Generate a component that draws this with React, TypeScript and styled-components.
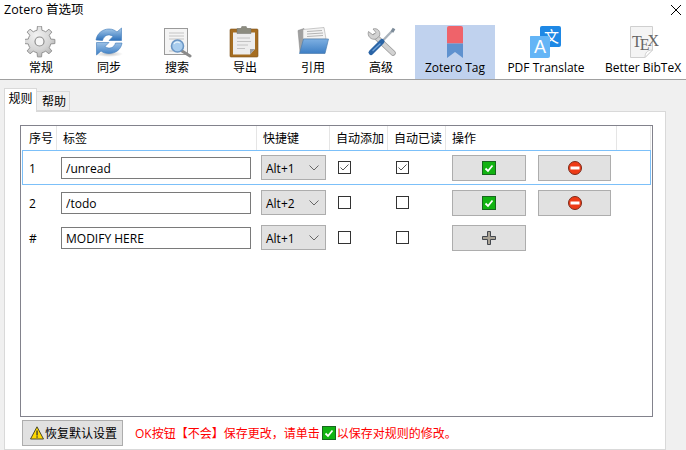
import React from 'react';
import styled, { createGlobalStyle } from 'styled-components';

const GlobalStyle = createGlobalStyle`
  html, body {
    margin: 0;
    padding: 0;
    background: #f0f0f0;
  }
  body {
    width: 686px;
    height: 450px;
    overflow: hidden;
    font-family: 'Open Sans', 'Noto Sans CJK SC', sans-serif;
    font-size: 12px;
    color: #000;
  }
  * {
    box-sizing: border-box;
  }
`;

const COLUMNS = '35px 200px 73px 58px 58px 171px 34px';

const gearPath = (() => {
  const teeth = 8;
  const points: string[] = [];
  for (let i = 0; i < teeth; i++) {
    const base = (i / teeth) * Math.PI * 2 - Math.PI / 2;
    const step = (Math.PI * 2) / teeth;
    [
      [-0.5, 11.5],
      [-0.27, 11.5],
      [-0.17, 15.5],
      [0.17, 15.5],
      [0.27, 11.5],
    ].forEach(([offset, radius]) => {
      const angle = base + offset * step;
      points.push(
        `${(14.5 + radius * Math.cos(angle)).toFixed(2)} ${(15.5 + radius * Math.sin(angle)).toFixed(2)}`,
      );
    });
  }
  return `M${points.join('L')}Z`;
})();

const GearIcon = () => (
  <svg width="32" height="32" viewBox="0 0 32 32">
    <defs>
      <radialGradient id="gearFill" cx="40%" cy="30%" r="80%">
        <stop offset="0" stopColor="#f2f2f2" />
        <stop offset="0.6" stopColor="#d4d4d4" />
        <stop offset="1" stopColor="#adadad" />
      </radialGradient>
    </defs>
    <path d={gearPath} fill="url(#gearFill)" stroke="#949494" strokeWidth="1" strokeLinejoin="round" />
    <circle cx="14.500" cy="15.500" r="4.500" fill="#f7f7f7" stroke="#8e8e8e" strokeWidth="1.200" />
  </svg>
);

const SyncIcon = () => (
  <svg width="32" height="32" viewBox="0 0 32 32">
    <defs>
      <linearGradient id="syncTop" x1="0" y1="0" x2="0" y2="1">
        <stop offset="0" stopColor="#a9cbea" />
        <stop offset="1" stopColor="#2d71bb" />
      </linearGradient>
      <linearGradient id="syncBottom" x1="0" y1="0" x2="0" y2="1">
        <stop offset="0" stopColor="#9cc1e6" />
        <stop offset="1" stopColor="#3a7dc4" />
      </linearGradient>
      <radialGradient id="syncShadow">
        <stop offset="0" stopColor="#999" stopOpacity="0.6" />
        <stop offset="1" stopColor="#999" stopOpacity="0" />
      </radialGradient>
    </defs>
    <ellipse cx="16" cy="28" rx="14" ry="3" fill="url(#syncShadow)" />
    <path
      d="M3 14C4 7 10 3 16 3C20 3 22 4.500 24 6L28.500 2V14.500H16L20 10.500C16 7.500 11 9 9.500 14.500Z"
      fill="url(#syncTop)"
      stroke="#3d79b8"
      strokeWidth="0.6"
    />
    <path
      d="M29 17C28 24 22 27.500 16 27.500C12 27.500 10 26.500 8 25L3.500 29V16.500H16L12 20.500C16 23.500 21 22 22.500 17Z"
      fill="url(#syncBottom)"
      stroke="#3d79b8"
      strokeWidth="0.6"
    />
  </svg>
);

const SearchIcon = () => (
  <svg width="32" height="32" viewBox="0 0 32 32">
    <rect x="3.500" y="2.500" width="23" height="26" fill="#f4f4f4" stroke="#9a9a9a" />
    <path d="M8 7H23M8 10H23M8 13H23M8 25H13" stroke="#c4c4c4" strokeWidth="1" />
    <path d="M21 25L29 30" stroke="#8a8a8a" strokeWidth="3" strokeLinecap="round" />
    <circle cx="16.500" cy="20" r="6" fill="#a9cdee" stroke="#6b96c4" strokeWidth="1.600" />
    <path d="M13 18C14 16 17 15.500 19 17" stroke="#e6f2fb" strokeWidth="1.200" fill="none" />
  </svg>
);

const ClipboardIcon = () => (
  <svg width="32" height="32" viewBox="1 0 32 32">
    <rect x="2" y="3" width="28" height="28" rx="1" fill="#a56d21" stroke="#7d5217" strokeWidth="0.6" />
    <path d="M5 6.500H27V23L22 28.500H5Z" fill="#ededed" />
    <path d="M22 28.500L22 23H27Z" fill="#9d9d9d" />
    <path d="M9 2.500H13L13.800 0.500H18.200L19 2.500H23V7.500H9Z" fill="#8c8c80" stroke="#73736a" strokeWidth="0.5" />
    <path d="M9 12H22M9 15.500H23M9 19H20M9 22.500H17" stroke="#c2c2c2" strokeWidth="1" />
  </svg>
);

const FolderIcon = () => (
  <svg width="32" height="32" viewBox="0 0 32 32">
    <path d="M1 4.500L7 2.500V26H3Z" fill="#a0a0a0" stroke="#808080" strokeWidth="0.5" />
    <path d="M6 3.500L27 1.500L29 13H6Z" fill="#f3f3f3" stroke="#a8a8a8" strokeWidth="0.6" />
    <path d="M10 5.500L25 4.500M10 8L26 7M10 10.500L26 9.500" stroke="#b4b4b4" strokeWidth="1" />
    <defs>
      <linearGradient id="folderFill" x1="0" y1="0" x2="0" y2="1">
        <stop offset="0" stopColor="#7eb0e2" />
        <stop offset="1" stopColor="#3d7ec4" />
      </linearGradient>
    </defs>
    <path d="M6.500 13H31.500L28 27.500H2.500Z" fill="url(#folderFill)" stroke="#4d7eaf" strokeWidth="0.7" />
  </svg>
);

const ToolsIcon = () => (
  <svg width="32" height="32" viewBox="0 0 32 32">
    <path d="M10 10L28 27" stroke="#9c9c9c" strokeWidth="5.500" strokeLinecap="round" />
    <path d="M10 10L28 27" stroke="#d2d2d2" strokeWidth="4" strokeLinecap="round" />
    <path
      d="M3.500 5.500L8 9L11 6.500L8 3C12 1.500 16 5 14.500 10L11 13C6 14.500 2 10 3.500 5.500Z"
      fill="#d2d2d2"
      stroke="#929292"
      strokeWidth="0.8"
    />
    <path d="M28.500 3.500L16 16.500" stroke="#a9b2bb" strokeWidth="2.400" />
    <path d="M29 2.500L27 6" stroke="#7c8b99" strokeWidth="3" />
    <path d="M17 15.500L6 26.500" stroke="#2a64a6" strokeWidth="5" strokeLinecap="round" />
    <path d="M15 18L8 24.500" stroke="#6fa2d8" strokeWidth="1.300" strokeLinecap="round" />
  </svg>
);

const TagIcon = () => (
  <svg width="32" height="32" viewBox="0 0 32 32">
    <path d="M8 17.500V2Q8 0 10 0H22Q24 0 24 2V17.500Z" fill="#ef636a" />
    <path d="M8 17.500H24V32L16 26L8 32Z" fill="#5f92cf" />
  </svg>
);

const TranslateGlyph = styled.text<{ $size: number }>`
  font-family: 'Liberation Sans', 'Noto Sans CJK SC', sans-serif;
  font-size: ${({ $size }) => $size}px;
  fill: #fff;
`;

const TranslateIcon = () => (
  <svg width="32" height="32" viewBox="1 0 32 32">
    <rect x="11" y="0" width="21" height="21" rx="2" fill="#1e88e5" />
    <TranslateGlyph x="15" y="16" $size={15}>
      文
    </TranslateGlyph>
    <rect x="0" y="10" width="21" height="22" rx="2" fill="#64b5f6" />
    <TranslateGlyph x="5" y="27" $size={18}>
      A
    </TranslateGlyph>
  </svg>
);

const TexGlyph = styled.text`
  font-family: 'Liberation Serif', serif;
  font-size: 16px;
  fill: #666;
`;

const TexIcon = () => (
  <svg width="32" height="32" viewBox="0 0 32 32">
    <path d="M3.500 0.500H25.500V24L18 31.500H3.500Z" fill="#f4f4f4" stroke="#cfcfcf" />
    <path d="M25.500 24L18 31.500C18 27 20 24 25.500 24Z" fill="#fff" stroke="#d0d0d0" />
    <TexGlyph x="5" y="21" dx="0 -2 -2" dy="0 3 -4">
      TEX
    </TexGlyph>
  </svg>
);

const CheckIcon = () => (
  <svg width="14" height="14" viewBox="0 0 14 14">
    <rect x="0.500" y="0.500" width="13" height="13" fill="#12b312" stroke="#17661e" />
    <path d="M3.500 7.500L6 10L10.500 4.500" fill="none" stroke="#fff" strokeWidth="1.800" />
  </svg>
);

const RemoveIcon = () => (
  <svg width="14" height="14" viewBox="0 0 14 14">
    <circle cx="7" cy="7" r="6.500" fill="#ee3b17" stroke="#7b2a1a" />
    <rect x="2.500" y="5.500" width="9" height="3" fill="#fff" />
  </svg>
);

const AddIcon = () => (
  <svg width="14" height="14" viewBox="0 0 14 14">
    <path
      d="M5.500 0.500H8.500V5.500H13.500V8.500H8.500V13.500H5.500V8.500H0.500V5.500H5.500Z"
      fill="#a8a295"
      stroke="#44484f"
    />
  </svg>
);

const WarningIcon = () => (
  <svg width="14" height="14" viewBox="0 0 14 14">
    <path d="M7 0.800L13.500 13H0.500Z" fill="#ffd800" stroke="#4a4a30" strokeLinejoin="round" />
    <rect x="6.400" y="4.500" width="1.300" height="5" fill="#333" />
    <rect x="6.400" y="10.300" width="1.300" height="1.400" fill="#333" />
  </svg>
);

const Window = styled.div`
  width: 686px;
  height: 450px;
  display: flex;
  flex-direction: column;
  overflow: hidden;
`;

const Head = styled.header`
  height: 80px;
  flex: none;
  background: #fff;
  border-bottom: 1px solid #a0a0a0;
`;

const TitleBar = styled.div`
  height: 25px;
  padding: 0 5px 5px 4px;
  display: flex;
  align-items: center;
  justify-content: space-between;
  font-size: 12.5px;
  line-height: 20px;
`;

const Toolbar = styled.nav`
  display: flex;
  padding-left: 7px;
  width: 700px;
`;

const ToolItem = styled.div<{ $width: number; $active?: boolean }>`
  flex: none;
  width: ${({ $width }) => $width}px;
  height: 54px;
  padding-top: 1px;
  display: flex;
  flex-direction: column;
  align-items: center;
  background: ${({ $active }) => ($active ? '#c0d2ee' : 'transparent')};
`;

const ToolLabel = styled.span`
  margin-top: 2px;
  line-height: 16px;
  white-space: nowrap;
`;

const Tabs = styled.div`
  display: flex;
  align-items: flex-end;
  height: 31px;
  padding-left: 4px;
  flex: none;
`;

const Tab = styled.div<{ $active?: boolean }>`
  border: 1px solid #d9d9d9;
  border-left-width: ${({ $active }) => ($active ? 1 : 0)}px;
  border-bottom-width: ${({ $active }) => ($active ? 0 : 1)}px;
  background: ${({ $active }) => ($active ? '#fff' : '#f0f0f0')};
  height: ${({ $active }) => ($active ? 24 : 20)}px;
  margin-bottom: ${({ $active }) => ($active ? -1 : 0)}px;
  width: 33px;
  padding-left: ${({ $active }) => ($active ? 0 : 2)}px;
  text-align: center;
  line-height: 20px;
  position: relative;
`;

const Panel = styled.section`
  flex: 1;
  width: 662px;
  margin-left: 4px;
  background: #fff;
  border: 1px solid #d9d9d9;
  padding: 13px 12px 0 15px;
`;

const ListBox = styled.div`
  width: 633px;
  height: 292px;
  border: 1px solid #82828c;
  padding: 0 1px;
`;

const HeaderRow = styled.div`
  display: grid;
  grid-template-columns: ${COLUMNS};
  height: 24px;
`;

const HeaderCell = styled.div`
  padding: 1px 0 0 6px;
  line-height: 24px;
  border-right: 1px solid #e5e5e5;
  white-space: nowrap;
  overflow: hidden;

  &:first-child {
    padding-left: 7px;
  }
`;

const Row = styled.div<{ $selected?: boolean }>`
  display: grid;
  grid-template-columns: ${COLUMNS};
  align-items: center;
  height: 35px;
  width: 629px;
  outline: 1px solid ${({ $selected }) => ($selected ? '#7cc0f9' : 'transparent')};
  outline-offset: -1px;
`;

const Index = styled.span`
  padding: 1px 0 0 7px;
`;

const TagInput = styled.input`
  width: 190px;
  height: 22px;
  margin-left: 4px;
  padding: 1px 4px 0;
  border: 1px solid #7a7a7a;
  border-radius: 0;
  outline: none;
  background: #fff;
  font: inherit;
  color: #000;
`;

const Shortcut = styled.div`
  width: 65px;
  height: 25px;
  margin-left: 4px;
  padding: 1px 6px 0 4px;
  display: flex;
  align-items: center;
  justify-content: space-between;
  background: #e1e1e1;
  border: 1px solid #adadad;
`;

const CheckCell = styled.div`
  padding-left: 8px;
  display: flex;
`;

const CheckBox = styled.div`
  width: 13px;
  height: 13px;
  border: 1px solid #333;
  background: #fff;
  display: flex;
`;

const Actions = styled.div`
  padding-left: 6px;
  display: flex;
  gap: 12px;
`;

const ActionButton = styled.button<{ $width: number }>`
  width: ${({ $width }) => $width}px;
  height: 26px;
  padding: 0;
  display: flex;
  align-items: center;
  justify-content: center;
  background: #e1e1e1;
  border: 1px solid #adadad;
  border-radius: 0;
`;

const Footer = styled.div`
  margin-top: 3px;
  display: flex;
  align-items: center;
  gap: 12px;
  padding-left: 2px;
`;

const ResetButton = styled.button`
  width: 101px;
  height: 26px;
  padding: 0 0 0 7px;
  display: flex;
  align-items: center;
  gap: 1px;
  background: #e1e1e1;
  border: 1px solid #adadad;
  border-radius: 0;
  font: inherit;
  color: #000;
`;

const Notice = styled.div`
  display: flex;
  align-items: center;
  color: #ff0000;
  white-space: nowrap;
`;

const NoticeIcon = styled.span`
  display: flex;
  margin: 0 1px 0 2px;
`;

const tools = [
  { label: '常规', width: 68, icon: <GearIcon /> },
  { label: '同步', width: 68, icon: <SyncIcon /> },
  { label: '搜索', width: 68, icon: <SearchIcon /> },
  { label: '导出', width: 68, icon: <ClipboardIcon /> },
  { label: '引用', width: 68, icon: <FolderIcon /> },
  { label: '高级', width: 68, icon: <ToolsIcon /> },
  { label: 'Zotero Tag', width: 80, icon: <TagIcon />, active: true },
  { label: 'PDF Translate', width: 102, icon: <TranslateIcon /> },
  { label: 'Better BibTeX', width: 92, icon: <TexIcon /> },
];

const headers = ['序号', '标签', '快捷键', '自动添加', '自动已读', '操作', ''];

const rules = [
  { id: '1', tag: '/unread', key: 'Alt+1', add: true, read: true, selected: true, saved: true },
  { id: '2', tag: '/todo', key: 'Alt+2', add: false, read: false, selected: false, saved: true },
  { id: '#', tag: 'MODIFY HERE', key: 'Alt+1', add: false, read: false, selected: false, saved: false },
];

const Check: React.FC<{ checked: boolean }> = ({ checked }) => (
  <CheckCell>
    <CheckBox>
      {checked && (
        <svg width="11" height="11" viewBox="0 0 11 11">
          <path d="M1.500 5.500L4 8L9.500 2.500" fill="none" stroke="#555" strokeWidth="1" />
        </svg>
      )}
    </CheckBox>
  </CheckCell>
);

export default function App() {
  return (
    <Window>
      <GlobalStyle />
      <Head>
        <TitleBar>
          <span>Zotero 首选项</span>
          <svg width="10" height="10" viewBox="0 0 10 10">
            <path d="M0 0L10 10M10 0L0 10" stroke="#000" strokeWidth="1" />
          </svg>
        </TitleBar>
        <Toolbar>
          {tools.map(({ label, width, icon, active }) => (
            <ToolItem key={label} $width={width} $active={active}>
              {icon}
              <ToolLabel>{label}</ToolLabel>
            </ToolItem>
          ))}
        </Toolbar>
      </Head>
      <Tabs>
        <Tab $active>规则</Tab>
        <Tab>帮助</Tab>
      </Tabs>
      <Panel>
        <ListBox>
          <HeaderRow>
            {headers.map((header, i) => (
              <HeaderCell key={i}>{header}</HeaderCell>
            ))}
          </HeaderRow>
          {rules.map((rule) => (
            <Row key={rule.id} $selected={rule.selected}>
              <Index>{rule.id}</Index>
              <TagInput value={rule.tag} readOnly />
              <Shortcut>
                {rule.key}
                <svg width="10" height="6" viewBox="0 0 10 6">
                  <path d="M0.500 0.500L5 5L9.500 0.500" fill="none" stroke="#666" strokeWidth="1" />
                </svg>
              </Shortcut>
              <Check checked={rule.add} />
              <Check checked={rule.read} />
              <Actions>
                <ActionButton $width={74}>{rule.saved ? <CheckIcon /> : <AddIcon />}</ActionButton>
                {rule.saved && (
                  <ActionButton $width={73}>
                    <RemoveIcon />
                  </ActionButton>
                )}
              </Actions>
            </Row>
          ))}
        </ListBox>
        <Footer>
          <ResetButton>
            <WarningIcon />
            恢复默认设置
          </ResetButton>
          <Notice>
            OK按钮【不会】保存更改，请单击
            <NoticeIcon>
              <CheckIcon />
            </NoticeIcon>
            以保存对规则的修改。
          </Notice>
        </Footer>
      </Panel>
    </Window>
  );
}
